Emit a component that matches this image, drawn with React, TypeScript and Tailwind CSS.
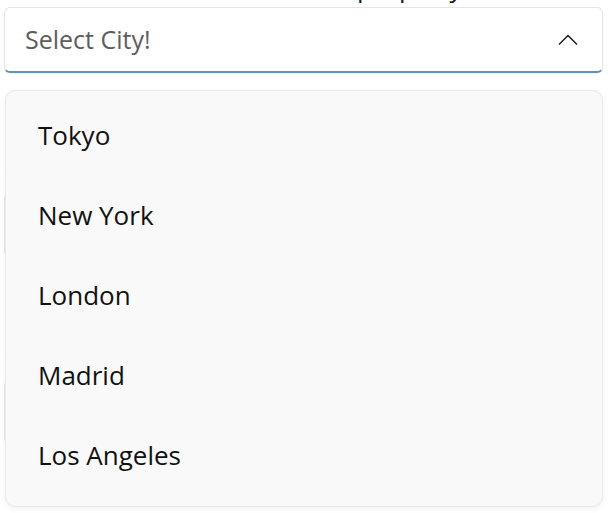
const cities = ["Tokyo", "New York", "London", "Madrid", "Los Angeles"];

export default function App() {
  return (
    <div className="relative h-[513px] w-[611px] overflow-hidden bg-white font-['Open_Sans',sans-serif] text-[#1a1a1a]">
      {/* Form behind the popup */}
      <div className="pl-[4px] pr-[8px]">
        <div className="-mt-[30px] mb-[2px] ml-[28px] h-[35px] whitespace-nowrap text-[26px] leading-[35px]">
          Choose the location of the property
        </div>

        {/* ComboBox */}
        <div className="flex h-[66px] items-center justify-between rounded-[6px] border border-[#e5e5e5] border-b-2 border-b-[#6192bd] bg-white pl-[20px] pr-[24px] shadow-[0_1px_2px_rgba(0,0,0,0.06)]">
          <span className="text-[25px] text-[#5d5d5d]">Select City!</span>
          <svg viewBox="0 0 20 12" className="h-[12px] w-[20px]" fill="none">
            <polyline points="1,10.5 10,1.5 19,10.5" stroke="#1a1a1a" strokeWidth="1.5" strokeLinejoin="miter" />
          </svg>
        </div>

        <div className="mt-[81px] h-[35px] text-[26px] leading-[35px]">City name</div>
        <div className="mt-[4px] h-[64px] rounded-[6px] border border-[#e5e5e5] bg-white" />

        <div className="mt-[81px] h-[35px] text-[26px] leading-[35px]">Country</div>
        <div className="mt-[7px] h-[64px] rounded-[6px] border border-[#e5e5e5] bg-white" />
      </div>

      {/* Dropdown popup */}
      <div className="absolute left-[5px] top-[90px] w-[598px] rounded-[10px] border border-[#e8e8e8] bg-[#f9f9f9] pb-[11px] pt-[4px] shadow-[0_2px_6px_rgba(0,0,0,0.05)]">
        {cities.map((city) => (
          <div key={city} className="flex h-[80px] items-center pl-[32px] text-[26px] text-[#111111]">
            {city}
          </div>
        ))}
      </div>
    </div>
  );
}
